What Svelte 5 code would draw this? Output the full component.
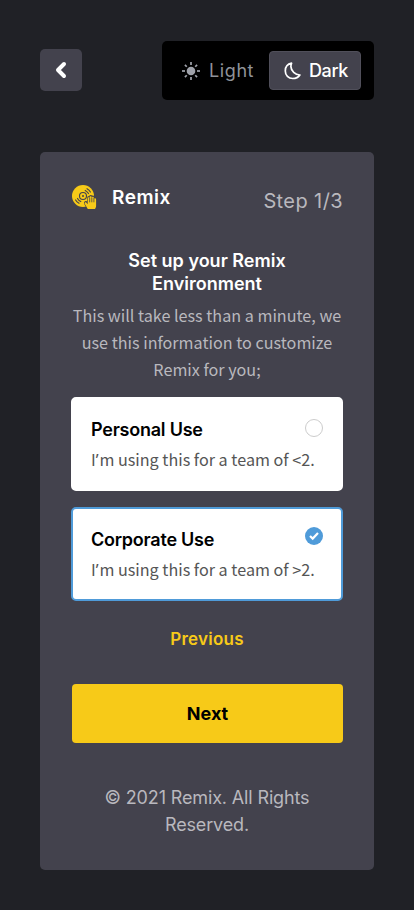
<script>
  const options = [
    { id: 'personal', title: 'Personal Use', text: 'm using this for a team of <2.' },
    { id: 'corporate', title: 'Corporate Use', text: 'm using this for a team of >2.' }
  ];
  let selected = $state('corporate');
  let theme = $state('dark');
  const rays = [0, 45, 90, 135, 180, 225, 270, 315];
</script>

<main>
  <header class="topbar">
    <button class="back" aria-label="Back">
      <svg width="42" height="42" viewBox="0 0 42 42" fill="none" stroke="#fff" stroke-width="4" stroke-linecap="round" stroke-linejoin="round"><path d="M24 15l-6 6 6 6" /></svg>
    </button>
    <div class="themes">
      <button class="theme light" class:active={theme === 'light'} onclick={() => (theme = 'light')}>
        <svg width="18" height="18" viewBox="0 0 18 18" fill="#a0a3ab" stroke="#a0a3ab" stroke-width="1.7">
          <circle cx="9" cy="9" r="4.3" stroke="none" />
          {#each rays as angle}
            <path d={angle % 90 ? 'M9 .4v2.600' : 'M9 0v3'} transform="rotate({angle} 9 9)" />
          {/each}
        </svg>
        <span>Light</span>
      </button>
      <button class="theme dark" class:active={theme === 'dark'} onclick={() => (theme = 'dark')}>
        <svg width="18" height="18" viewBox="0 0 18 18" fill="none" stroke="#fff" stroke-width="1.7" stroke-linejoin="round"><path d="M7.600 1.200C3.900 2 1.300 5 1.300 8.900c0 4.300 3.200 7.600 7.400 7.600 3.100 0 5.700-1.200 7.200-3.500C11.100 12.600 7.100 8.900 6.900 4.600c0-1.200.2-2.300.7-3.400z" /></svg>
        <span>Dark</span>
      </button>
    </div>
  </header>

  <section class="card">
    <div class="brandrow">
      <svg class="logo" width="26" height="26" viewBox="0 0 26 26" fill="none">
        <circle cx="11" cy="11" r="11" fill="#f7ca18" />
        <g stroke="#43424d" stroke-width="1.1" stroke-linecap="round">
          <circle cx="11" cy="11" r="3.5" />
          <circle cx="11" cy="11" r="1" fill="#43424d" stroke="none" />
          <path d="M13.200 5.400q2.100 1 3.300 3.200M15 3.700q2.200 1.200 3.400 3.400M8.800 16.600q-2.100-1-3.300-3.200M7 18.300q-2.200-1.200-3.400-3.400" />
        </g>
        <g transform="translate(0 -.5)">
          <path d="M15.600 23.500l-2.500-4.500c-.5-1.200.8-2 1.700-1l1.300 1.500v-6c0-1.300 1.500-1.300 1.700 0v-1c.1-1.300 1.900-1.300 2 0v.3c.2-1.200 1.900-1.200 2 .1v1.100c.3-1.100 2.100-.9 2.100.5v6.300c0 1.500-.3 2-.8 2.700z" fill="#f7ca18" stroke="#43424d" stroke-width="2" stroke-linejoin="round" />
          <path d="M15.800 24.500l-3.100-5.300c-.5-1.200.8-2 1.700-1l1.300 1.500v-6c0-1.300 1.700-1.300 1.900 0v-1c.1-1.300 2-1.300 2.100 0v.5c.2-1.200 2-1.200 2.100.1v1.100c.3-1.100 2.300-.9 2.300.5v6.300c0 1.500-.5 2.400-1.100 3.300z" fill="#f7ca18" />
          <path d="M17.700 13.300v4.500M19.800 13v4.800M21.900 13.800v4" stroke="#43424d" stroke-width=".8" />
        </g>
      </svg>
      <span class="brand">Remix</span>
      <span class="step">Step 1/3</span>
    </div>

    <h1>Set up your Remix<br />Environment</h1>
    <p class="intro">This will take less than a minute, we<br />use this information to customize<br />Remix for you;</p>

    <div class="options">
      {#each options as option}
        <button class="option {option.id}" class:selected={selected === option.id} onclick={() => (selected = option.id)}>
          <span class="copy">
            <strong>{option.title}</strong>
            <span class="desc">I<span class="apos">’</span>{option.text}</span>
          </span>
          <svg class="mark" width="18" height="18" viewBox="0 0 18 18" fill="none">
            {#if selected === option.id}
              <circle cx="9" cy="9" r="9" fill="#4f9bd9" />
              <path d="M5 9l2.700 2.600 5.300-5.500" stroke="#fff" stroke-width="2.200" />
            {:else}
              <circle cx="9" cy="9" r="8.500" stroke="#ccc" />
            {/if}
          </svg>
        </button>
      {/each}
    </div>

    <button class="previous">Previous</button>
    <button class="next">Next</button>
    <footer>© 2021 Remix. All Rights<br />Reserved.</footer>
  </section>
</main>

<style>
  :global(body) { margin: 0; background: #202126; }
  main {
    box-sizing: border-box;
    width: 414px;
    height: 910px;
    padding: 41px 40px 40px;
    background: #202126;
    font-family: 'Inter', 'Liberation Sans', sans-serif;
    overflow: hidden;
  }
  button { font: inherit; border: 0; padding: 0; margin: 0; cursor: pointer; }
  svg { display: block; flex: none; }
  .topbar { display: flex; justify-content: space-between; align-items: center; height: 59px; }
  .back { width: 42px; height: 42px; border-radius: 5px; background: #43424d; margin-bottom: 1px; }
  .themes {
    box-sizing: border-box; display: flex; align-items: center; justify-content: space-between;
    width: 212px; height: 59px; padding: 0 13px 0 7px; background: #000; border-radius: 5px;
  }
  .theme {
    box-sizing: border-box; display: flex; align-items: center; height: 39px; border-radius: 4px;
    background: transparent; color: #8f9299; font-size: 18px; white-space: nowrap; border: 1px solid transparent;
  }
  .light { width: 99px; padding-left: 12px; gap: 9px; letter-spacing: .6px; }
  .dark { width: 92px; padding-left: 14px; gap: 7px; font-weight: 500; letter-spacing: -.4px; }
  .active { background: #43424d; border-color: #504f5a; color: #fff; }
  .card {
    box-sizing: border-box; display: flex; flex-direction: column; height: 718px; margin-top: 52px;
    padding: 32px 31px 0; border-radius: 5px; background: #43424d;
  }
  .card > * { flex: none; }
  .brandrow { display: flex; height: 28px; padding-left: 1px; }
  .logo { margin-top: 1px; }
  .brand { margin-left: 14px; color: #fff; font-size: 19px; font-weight: 600; line-height: 27px; letter-spacing: .5px; }
  .step { margin-left: auto; margin-right: 0; color: #b9b8be; font-size: 20px; line-height: 34px; white-space: nowrap; letter-spacing: .4px; }
  h1 { margin: 37px 0 0; color: #fff; text-align: center; font-size: 18px; line-height: 23px; font-weight: 600; white-space: nowrap; }
  .intro {
    margin: 7px 0 0; height: 81px; color: #b9b8be; text-align: center; white-space: nowrap;
    font: 16.160px/27px 'Noto Sans CJK SC', 'Noto Sans', sans-serif;
  }
  .options { display: flex; flex-direction: column; gap: 16px; margin-top: 14px; }
  .option {
    box-sizing: border-box; display: flex; align-items: flex-start; justify-content: space-between; height: 94px; padding: 18px 18px 0;
    border: 2px solid #fff; border-radius: 5px; background: #fff; text-align: left;
  }
  .option.selected { border-color: #4f9bd9; }
  .copy { display: flex; flex-direction: column; width: 0; white-space: nowrap; }
  strong { color: #000; font-size: 18px; line-height: 24px; font-weight: 600; letter-spacing: -.23px; padding-top: 1px; }
  .desc { margin-top: 4px; color: #555; font: 16.160px/27px 'Noto Sans CJK SC', 'Noto Sans', sans-serif; }
  .apos { font-family: 'Noto Sans', sans-serif; line-height: 1; letter-spacing: .8px; }
  .mark { margin-top: 2px; }
  .selected .mark { margin-top: 0; }
  .previous { align-self: center; height: 30px; margin-top: 23px; background: none; color: #f7ca18; font-size: 17px; font-weight: 600; letter-spacing: .25px; }
  .next { width: 271px; height: 59px; margin: 30px 0 0 1px; border-radius: 4px; background: #f7ca18; color: #000; font-size: 18px; font-weight: 700; }
  footer { margin-top: 41px; color: #b9b8be; text-align: center; font-size: 18px; line-height: 27px; white-space: nowrap; letter-spacing: -.14px; }
</style>
